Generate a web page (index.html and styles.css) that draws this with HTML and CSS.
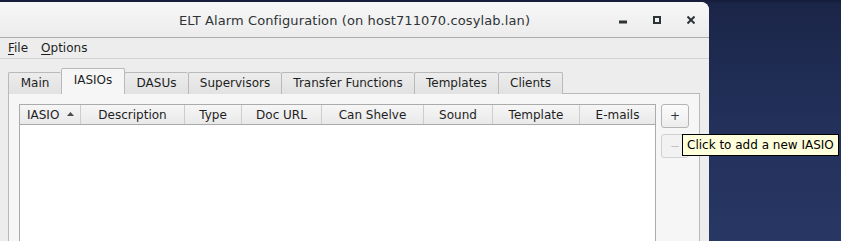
FILE: index.html
```html
<!DOCTYPE html>
<html lang="en">
<head>
    <meta charset="UTF-8">
    <meta name="viewport" content="width=device-width, initial-scale=1.0">
    <title>ELT Alarm Configuration</title>
    <link rel="stylesheet" href="styles.css">
</head>
<body>
    <div class="desktop">
        <div class="window">
            <header class="titlebar">
                <span></span>
                <span class="title">ELT Alarm Configuration (on host711070.cosylab.lan)</span>
                <div class="controls">
                    <svg width="8" height="8" viewBox="0 0 8 8"><rect x="0" y="5" width="8" height="2"/></svg>
                    <svg width="8" height="8" viewBox="0 0 8 8"><rect x="1" y="1" width="6" height="6" fill="none" stroke-width="2"/></svg>
                    <svg width="8" height="8" viewBox="0 0 8 8"><path d="M0.5 0.5 L7.5 7.5 M7.5 0.5 L0.5 7.5" fill="none" stroke-width="2"/></svg>
                </div>
            </header>
            <nav class="menubar">
                <span class="menu"><u>F</u>ile</span>
                <span class="menu"><u>O</u>ptions</span>
            </nav>
            <div class="content">
                <div class="tabs">
                    <div class="tab">Main</div>
                    <div class="tab on">IASIOs</div>
                    <div class="tab">DASUs</div>
                    <div class="tab">Supervisors</div>
                    <div class="tab">Transfer Functions</div>
                    <div class="tab">Templates</div>
                    <div class="tab">Clients</div>
                </div>
                <div class="panel">
                    <div class="table">
                        <div class="thead">
                            <div class="th">IASIO <svg class="sort" width="7" height="4" viewBox="0 0 7 4"><path d="M0 4 L3.5 0 L7 4 Z"/></svg></div>
                            <div class="th">Description</div>
                            <div class="th">Type</div>
                            <div class="th">Doc URL</div>
                            <div class="th">Can Shelve</div>
                            <div class="th">Sound</div>
                            <div class="th">Template</div>
                            <div class="th">E-mails</div>
                        </div>
                        <div class="tbody"></div>
                    </div>
                    <div class="side">
                        <button class="btn">+</button>
                        <button class="btn" disabled>&minus;</button>
                    </div>
                </div>
            </div>
        </div>
        <div class="tooltip">Click to add a new IASIO</div>
    </div>
</body>
</html>
```

FILE: styles.css
```css
body {
    margin: 0;
    font-family: "DejaVu Sans", sans-serif;
    font-size: 12px;
    color: #1e1e1e;
}
.desktop {
    position: relative;
    width: 841px;
    height: 241px;
    overflow: hidden;
    padding-top: 2px;
    box-sizing: border-box;
    background: linear-gradient(180deg, #141c38 0px, #1b2548 4px, #22305a 120px, #283763 241px);
}
.window {
    width: 709px;
    height: 300px;
    background: #ededed;
    border-top-right-radius: 8px;
    overflow: hidden;
}
.titlebar {
    display: grid;
    grid-template-columns: 1fr auto 1fr;
    align-items: center;
    height: 35px;
    background: linear-gradient(#f7f7f7, #ececec);
    border-bottom: 1px solid #adada8;
}
.title {
    font-size: 13px;
    letter-spacing: 0.1px;
    color: #2e3436;
    padding-top: 1px;
}
.controls {
    justify-self: end;
    display: flex;
    gap: 26px;
    padding-right: 14px;
    padding-top: 1px;
}
.controls svg {
    fill: #2e3436;
    stroke: #2e3436;
}
.menubar {
    display: flex;
    height: 20px;
    align-items: center;
    border-bottom: 1px solid #d4d4d4;
    padding-left: 8px;
    gap: 13px;
}
.menu u {
    text-decoration-thickness: 1px;
    text-underline-offset: 2px;
}
.content {
    padding-top: 9px;
}
.tabs {
    display: flex;
    align-items: flex-end;
    padding-left: 8px;
    margin-bottom: -1px;
}
.tab {
    box-sizing: border-box;
    height: 22px;
    line-height: 21px;
    text-align: center;
    background: linear-gradient(#ececec, #e2e2e2);
    border: 1px solid #b9b9b9;
    border-bottom: none;
    border-right: none;
    border-radius: 2px 2px 0 0;
}
.tab:last-child {
    border-right: 1px solid #b9b9b9;
}
.tab.on {
    position: relative;
    height: 26px;
    line-height: 22px;
    background: #f6f6f6;
    border-right: 1px solid #b9b9b9;
    margin-right: -1px;
}
.tab:nth-child(1) { width: 53px; }
.tab:nth-child(2) { width: 64px; }
.tab:nth-child(3) { width: 64px; }
.tab:nth-child(4) { width: 93px; }
.tab:nth-child(5) { width: 133px; }
.tab:nth-child(6) { width: 84px; }
.tab:nth-child(7) { width: 65px; }
.panel {
    display: flex;
    align-items: flex-start;
    margin-left: 8px;
    width: 692px;
    height: 220px;
    box-sizing: border-box;
    padding: 10px;
    background: #f6f6f6;
    border: 1px solid #b9b9b9;
}
.table {
    flex: 1;
    height: 200px;
    background: #fff;
    border: 1px solid #ababab;
}
.thead {
    display: grid;
    grid-template-columns: 61px 104px 57px 80px 102px 69px 87px 1fr;
    height: 19px;
    background: linear-gradient(#f6f6f6, #e9e9e9);
    border-bottom: 1px solid #a9a9a9;
}
.th {
    display: flex;
    align-items: center;
    justify-content: center;
    gap: 8px;
    border-right: 1px solid #cdcdcd;
}
.th:first-child {
    justify-content: flex-start;
    padding-left: 7px;
}
.th:last-child {
    border-right: none;
}
.sort {
    fill: #4a4a4a;
    margin-top: -2px;
}
.side {
    display: flex;
    flex-direction: column;
    gap: 6px;
    margin-left: 5px;
}
.btn {
    width: 28px;
    height: 24px;
    padding: 0;
    font-family: "DejaVu Sans", sans-serif;
    font-size: 12px;
    color: #2e3436;
    background: linear-gradient(#fbfbfb, #ededed);
    border: 1px solid #b4b4b4;
    border-radius: 3px;
}
.btn:disabled {
    color: #c4c4c4;
    background: #f2f2f2;
    border-color: #d0d0d0;
}
.tooltip {
    position: absolute;
    left: 682px;
    top: 134px;
    width: 157px;
    height: 22px;
    box-sizing: border-box;
    padding-left: 4px;
    line-height: 20px;
    background: #ffffdc;
    border: 1px solid #000;
    color: #000;
}
```
